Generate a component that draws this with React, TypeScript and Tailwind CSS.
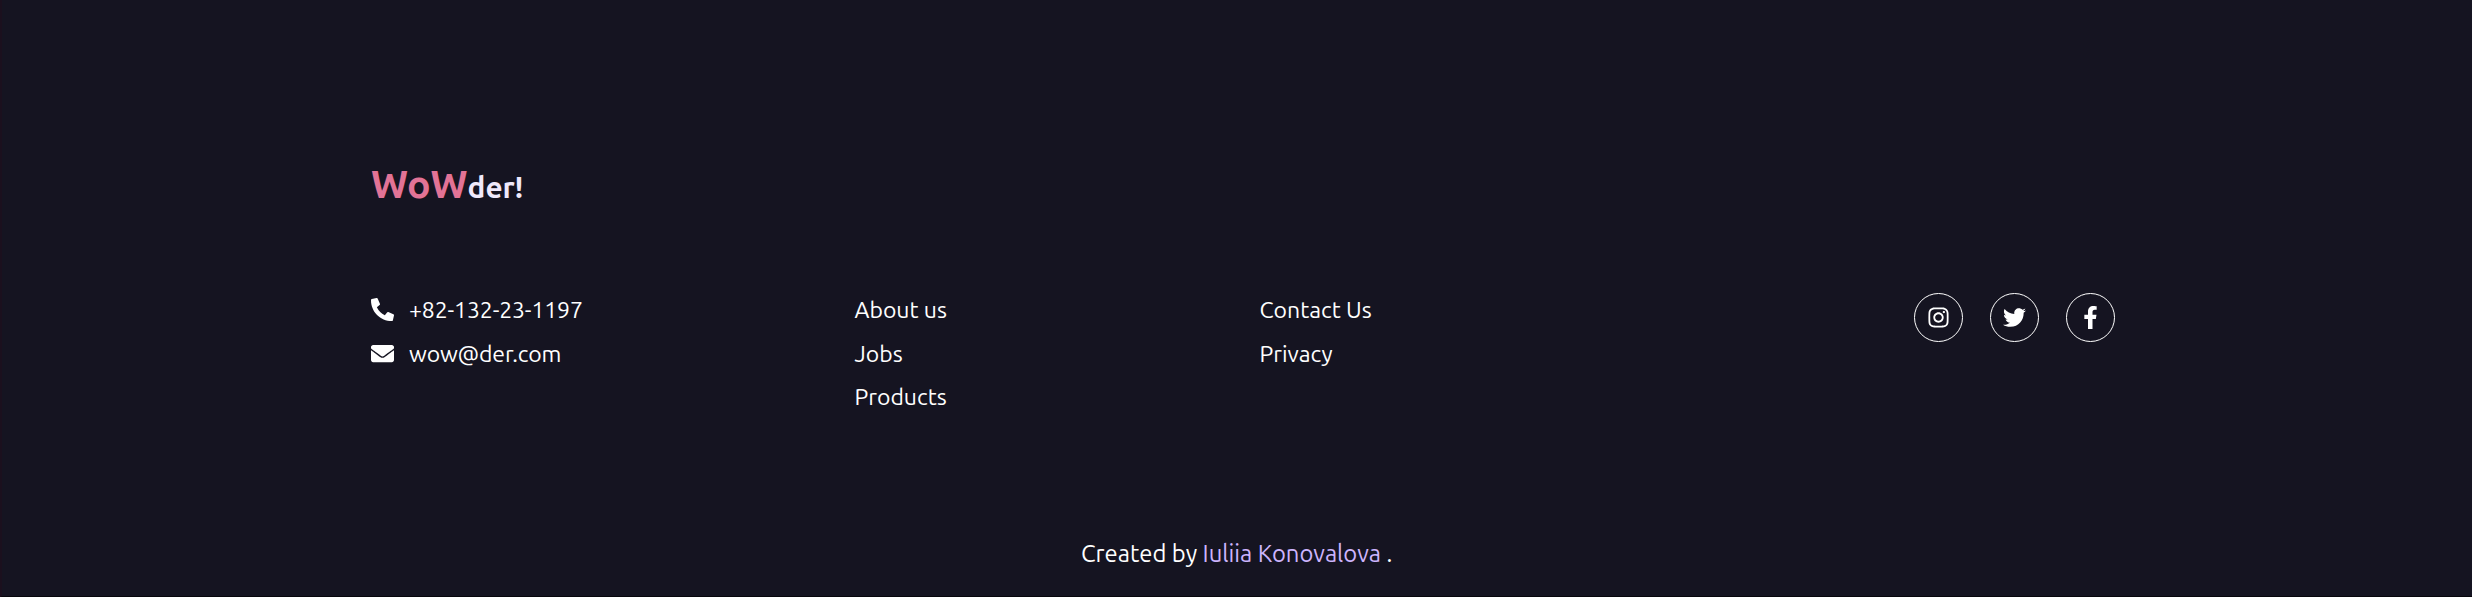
import { FaPhoneAlt, FaEnvelope, FaInstagram, FaTwitter, FaFacebookF } from "react-icons/fa";

const socials = [
  { label: "Instagram", Icon: FaInstagram },
  { label: "Twitter", Icon: FaTwitter },
  { label: "Facebook", Icon: FaFacebookF },
];

export default function App() {
  return (
    <footer className="flex h-[597px] w-full flex-col border-b border-l-2 border-b-[#07060c] border-l-[#1b101e] bg-[#151421] pl-[369px] pr-[357px] font-['Ubuntu','Noto_Sans',sans-serif] text-[23px] leading-[43.5px] text-white">
      <div className="mt-[152.5px] flex h-[60px] items-baseline font-bold leading-[60px]">
        <span className="whitespace-nowrap text-[39.3px] text-[#e27396]">WoW</span>
        <span className="whitespace-nowrap text-[29.8px] text-[#efe9fb]">der!</span>
      </div>
      <div className="mt-[75.5px] flex">
        <ul className="w-[483.5px]">
          <li className="flex items-center">
            <FaPhoneAlt className="mr-[15px] size-[23px]" />
            <span className="tracking-[-0.12px]">+82-132-23-1197</span>
          </li>
          <li className="flex items-center">
            <FaEnvelope className="mr-[15px] size-[23px]" />
            <span className="tracking-[-0.18px]">wow@der.com</span>
          </li>
        </ul>
        <ul className="w-[405px]">
          <li><a>About us</a></li>
          <li><a>Jobs</a></li>
          <li><a>Products</a></li>
        </ul>
        <ul>
          <li><a>Contact Us</a></li>
          <li><a>Privacy</a></li>
        </ul>
        <div className="ml-auto mt-[5px] flex h-[49px] gap-[27px]">
          {socials.map(({ label, Icon }) => (
            <a key={label} aria-label={label} className="flex size-[49px] items-center justify-center rounded-full border border-white">
              <Icon className="size-[23px]" />
            </a>
          ))}
        </div>
      </div>
      <p className="mt-[113px] pl-[710px] text-[23.8px]">
        Created by <a className="text-[#cdb4fe]">Iuliia Konovalova</a> .
      </p>
    </footer>
  );
}
